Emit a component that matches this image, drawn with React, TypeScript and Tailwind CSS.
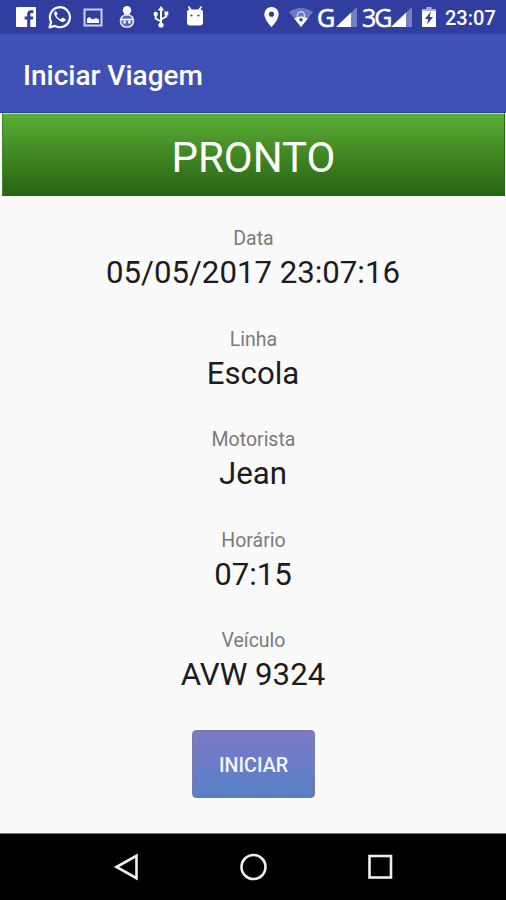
import type { ReactNode } from 'react';

interface Field {
  label: string;
  value: string;
}

const fields: Field[] = [
  { label: 'Data', value: '05/05/2017 23:07:16' },
  { label: 'Linha', value: 'Escola' },
  { label: 'Motorista', value: 'Jean' },
  { label: 'Horário', value: '07:15' },
  { label: 'Veículo', value: 'AVW 9324' },
];

function Slot({ children }: { children: ReactNode }) {
  return <div className="flex w-[33.8px] justify-center">{children}</div>;
}

function FacebookIcon() {
  return (
    <svg className="h-5 w-5" viewBox="0 0 20 20" fill="#fff">
      <path d="M1 0h18a1 1 0 0 1 1 1v18a1 1 0 0 1-1 1h-4.700v-7.600h2.600l.4-3h-3V7.500c0-.9.3-1.500 1.500-1.500h1.600V3.300c-.3 0-1.200-.1-2.300-.1-2.300 0-3.900 1.400-3.900 4v2.200H8.600v3h2.600V20H1a1 1 0 0 1-1-1V1a1 1 0 0 1 1-1z" />
    </svg>
  );
}

function WhatsAppIcon() {
  return (
    <svg className="h-6 w-6" viewBox="0 0 24 24">
      <path d="M1.600 22.400l1.500-5.500A10 10 0 1 1 7 20.900z" fill="none" stroke="#fff" strokeWidth="2.200" strokeLinejoin="round" />
      <path d="M8.300 6.500c-.3-.5-.8-.4-1.200 0-.9.9-1.200 2.300-.5 3.700 1.300 2.800 3.800 5.300 6.900 6.500 1.500.6 3.300.1 3.900-1.200.3-.7.300-1.300 0-1.500l-2.500-1.200c-.4-.2-.6-.1-.9.300l-.9 1c-.2.3-.5.300-.9.100-1.600-.8-2.900-1.900-3.700-3.400-.2-.3 0-.5.200-.7l.8-1c.1-.2.100-.4 0-.7z" fill="#fff" />
    </svg>
  );
}

function PictureIcon() {
  return (
    <svg className="h-[19px] w-5" viewBox="0 0 20 19">
      <rect x="1.500" y="1.500" width="17" height="16" fill="none" stroke="#cdd0ec" strokeWidth="2" />
      <path d="M4 15v-4.500l2.500-1.500 3 2.500L13 10l3 1.500V15z" fill="#fff" />
    </svg>
  );
}

function BabyIcon() {
  return (
    <svg className="h-[22px] w-4" viewBox="0 0 16 22">
      <circle cx="8" cy="4.200" r="4.200" fill="#fff" />
      <path d="M5.500 6.500h5v3.500h-5z" fill="#fff" />
      <rect x="1.600" y="9" width="12.800" height="12" rx="5.500" fill="#5c68b5" stroke="#dfe2f4" strokeWidth="1.700" />
      <path d="M2 13.500h12" stroke="#fff" strokeWidth="1.600" />
      <path d="M4.500 14.500h2.200v3H4.500zM9.300 14.500h2.200v3H9.300z" fill="#fff" />
    </svg>
  );
}

function UsbIcon() {
  return (
    <svg className="h-[22px] w-4" viewBox="0 0 16 22">
      <path d="M8 4v15M8 15.500l-5.300-3V9M8 13.500l5.300-3V8" fill="none" stroke="#fff" strokeWidth="2" />
      <path d="M8 0l3.200 4.600H4.800z" fill="#fff" />
      <path d="M11.500 5.500h3.800v3.700h-3.800z" fill="#fff" />
      <circle cx="2.700" cy="8" r="2.200" fill="#fff" />
      <circle cx="8" cy="19" r="2.600" fill="#fff" />
    </svg>
  );
}

function AndroidIcon() {
  return (
    <svg className="mb-[2px] h-5 w-[18px]" viewBox="0 0 18 20">
      <path d="M2.500 0.500l3 4.500M15.500 0.500L12.500 5" stroke="#fff" strokeWidth="1.800" />
      <path d="M1 5.500Q1.500 3.500 4 3.500h10q2.500 0 3 2v11q0 3-3 3H4q-3 0-3-3z" fill="#fff" />
      <circle cx="5.500" cy="9.500" r="1.100" fill="#303f9f" />
      <circle cx="12.500" cy="9.500" r="1.100" fill="#303f9f" />
    </svg>
  );
}

function PinIcon() {
  return (
    <svg className="h-5 w-[15px]" viewBox="0 0 15 20">
      <path fillRule="evenodd" fill="#fff" d="M7.500 0A7.200 7.200 0 0 0 .3 7.200C.3 12.500 7.500 20 7.500 20s7.200-7.500 7.200-12.800A7.200 7.200 0 0 0 7.500 0zm0 4.600a2.600 2.600 0 1 1 0 5.200 2.600 2.600 0 0 1 0-5.200z" />
    </svg>
  );
}

function WifiIcon() {
  return (
    <svg className="h-[19px] w-6" viewBox="0 0 24 19">
      <path d="M0 4Q12-4 24 4L12 19z" fill="#6d78bf" />
      <path d="M5.200 10.500Q12 6.500 18.800 10.500L12 19z" fill="#fff" />
      <path d="M8.500 9.500V7.200a3.500 3.500 0 0 1 7 0v2.300" fill="none" stroke="#c4c9e8" strokeWidth="1.500" />
      <circle cx="12" cy="11.800" r="1.700" fill="#303f9f" />
    </svg>
  );
}

function SignalIcon() {
  return (
    <svg className="h-5 w-[21px]" viewBox="0 0 21 20">
      <path d="M0 20L21 0v20z" fill="#7580c2" />
      <path d="M0 20L15 5.700V20z" fill="#fff" />
    </svg>
  );
}

function BatteryIcon() {
  return (
    <svg className="h-5 w-[14px]" viewBox="0 0 14 20">
      <path d="M4.500 0h5v2H14v4H0V2h4.500z" fill="#a9b0dc" />
      <path d="M0 4h14v16H0z" fill="#fff" />
      <path d="M8.800 4.500L3 12h3.300l-1.200 5.500L11 10H7.700z" fill="#303f9f" />
    </svg>
  );
}

function StatusBar() {
  return (
    <div className="flex h-[34px] items-center bg-[#303f9f] pl-[9px] text-white">
      <Slot><FacebookIcon /></Slot>
      <Slot><WhatsAppIcon /></Slot>
      <Slot><PictureIcon /></Slot>
      <Slot><BabyIcon /></Slot>
      <Slot><UsbIcon /></Slot>
      <Slot><AndroidIcon /></Slot>
      <div className="ml-auto flex items-center pr-[11px]">
        <PinIcon />
        <div className="ml-[10px]"><WifiIcon /></div>
        <span className="ml-1 w-[18px] font-['Open_Sans',sans-serif] text-[25px] leading-none [-webkit-text-stroke:0.7px_white]">G</span>
        <div className="ml-px"><SignalIcon /></div>
        <span className="ml-[5px] w-[26px] pt-px font-['Open_Sans',sans-serif] text-[25px] leading-none tracking-[-2px] [-webkit-text-stroke:0.5px_white]">3G</span>
        <div className="ml-[3px]"><SignalIcon /></div>
        <div className="ml-[10px]"><BatteryIcon /></div>
        <span className="ml-[9px] w-[50px] whitespace-nowrap pt-[2px] text-[20px] font-medium leading-none">23:07</span>
      </div>
    </div>
  );
}

function NavBar() {
  return (
    <nav className="flex h-[67px] items-center justify-center gap-[100px] border-t border-[#777] bg-black">
      <svg className="h-7 w-[27px]" viewBox="0 0 27 28" fill="none" stroke="#eee" strokeWidth="2.600">
        <path d="M3.500 14L23.500 2.800v22.400z" />
      </svg>
      <svg className="h-7 w-[27px]" viewBox="0 0 27 28" fill="none" stroke="#eee" strokeWidth="2.600">
        <circle cx="13.500" cy="14" r="12" />
      </svg>
      <svg className="h-7 w-[27px]" viewBox="0 0 27 28" fill="none" stroke="#eee" strokeWidth="2.600">
        <rect x="2.500" y="3" width="21.500" height="21.500" />
      </svg>
    </nav>
  );
}

export default function App() {
  return (
    <div className="flex h-[900px] w-[506px] flex-col overflow-hidden bg-[#fafafa] font-['Roboto',sans-serif]">
      <StatusBar />

      {/* Toolbar */}
      <header className="flex h-[79px] items-center border-b border-[#2f4296] bg-[#3f51b5] pl-[23px] pt-[5px]">
        <h1 className="text-[28px] font-medium leading-none text-white">Iniciar Viagem</h1>
      </header>

      {/* Trip status */}
      <div className="ml-[2px] mr-px flex h-[83px] items-center justify-center border border-t-[#b5d9a8] border-r-[#286b17] border-b-[#286412] border-l-[#3c8426] bg-linear-to-b from-[#5aae35] to-[#286412] pt-[7px]">
        <span className="text-[42px] leading-none text-white">PRONTO</span>
      </div>

      <main className="flex flex-1 flex-col items-center pt-[30px]">
        {fields.map((field) => (
          <div key={field.label} className="flex h-[100.5px] flex-col items-center">
            <span className="pl-px text-[19.5px] leading-[26px] text-[#7b7b7b]">{field.label}</span>
            <span className="text-[31.200px] leading-[42px] text-[#1c1c1c]">{field.value}</span>
          </div>
        ))}
        <button className="mt-px ml-px h-[68px] w-[123px] rounded-[4px] border border-[#7b7ba5] bg-linear-to-b from-[#7c79c8] to-[#5580c5] pt-[5px] text-[19.7px] font-medium text-[#f4f6ff]">
          INICIAR
        </button>
      </main>

      <NavBar />
    </div>
  );
}
